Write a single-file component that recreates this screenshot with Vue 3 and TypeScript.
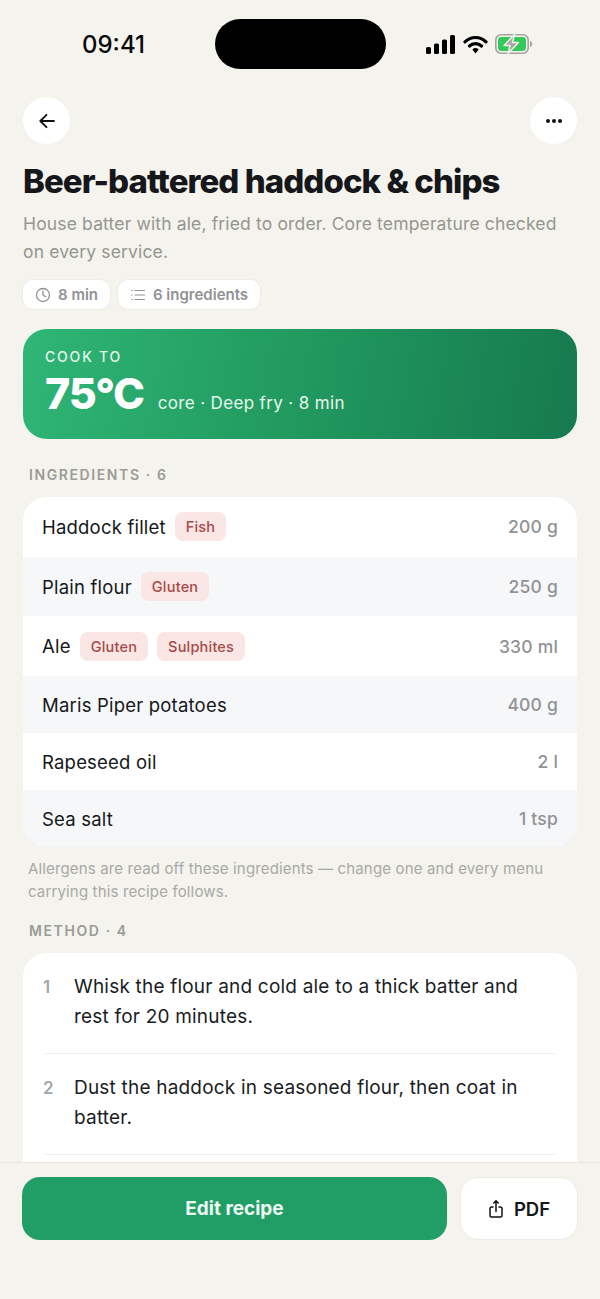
<script setup lang="ts">
interface Ingredient { name: string; qty: string; tags: string[] }
const ingredients: Ingredient[] = [
  { name: 'Haddock fillet', qty: '200 g', tags: ['Fish'] },
  { name: 'Plain flour', qty: '250 g', tags: ['Gluten'] },
  { name: 'Ale', qty: '330 ml', tags: ['Gluten', 'Sulphites'] },
  { name: 'Maris Piper potatoes', qty: '400 g', tags: [] },
  { name: 'Rapeseed oil', qty: '2 l', tags: [] },
  { name: 'Sea salt', qty: '1 tsp', tags: [] },
]
const steps: string[] = [
  'Whisk the flour and cold ale to a thick batter and rest for 20 minutes.',
  'Dust the haddock in seasoned flour, then coat in batter.',
  'Fry at 180°C for 8 minutes until deep golden and crisp.',
  'Check the core reaches 75°C, then drain and serve with chips.',
]
</script>

<template>
  <div class="phone">
    <div class="scroll">
      <div class="status">
        <span class="time">09:41</span>
        <div class="island"></div>
        <div class="status-icons">
          <svg width="31" height="19" viewBox="0 0 31 19"><rect x="1" y="12" width="5" height="7" rx="1.6"/><rect x="9" y="8.5" width="5" height="10.5" rx="1.6"/><rect x="17" y="4.5" width="5" height="14.5" rx="1.6"/><rect x="25" y="0" width="5" height="19" rx="1.6"/></svg>
          <svg width="25" height="19" viewBox="0 0 25 19"><path d="M2 6.8a15 15 0 0 1 21 0" fill="none" stroke="#000" stroke-width="3.2" stroke-linecap="round"/><path d="M6.5 11a9 9 0 0 1 12 0" fill="none" stroke="#000" stroke-width="3.2" stroke-linecap="round"/><path d="M9.3 14.4a5 5 0 0 1 6.4 0L12.5 18.4z" fill="#000"/></svg>
          <svg class="battery" width="38" height="20" viewBox="0 0 38 20"><rect x="0.8" y="0.8" width="32.4" height="18.4" rx="5.2" fill="none" stroke="#a4a49e" stroke-width="1.6"/><rect x="3" y="3" width="28" height="14" rx="3.4" fill="#34c759"/><path d="M35 7v6c1.4-.4 2.2-1.600 2.200-3S36.400 7.400 35 7z" fill="#a4a49e"/><path d="M19.500 0.500 9 11.500h6l-2 8 10.500-11h-6z" fill="#a8a8a2" stroke="#f4f3ee" stroke-width="1.400" stroke-linejoin="round"/></svg>
        </div>
      </div>

      <div class="nav">
        <button class="circle" aria-label="Back">
          <svg width="20" height="20" viewBox="0 0 20 20" fill="none" stroke="#111" stroke-width="1.800" stroke-linecap="round" stroke-linejoin="round"><path d="M17 10H3.500M9.500 3.800 3.300 10l6.200 6.200"/></svg>
        </button>
        <button class="circle" aria-label="More">
          <svg width="18" height="6" viewBox="0 0 18 6" fill="#111"><circle cx="3" cy="3" r="2"/><circle cx="9" cy="3" r="2"/><circle cx="15" cy="3" r="2"/></svg>
        </button>
      </div>

      <h1 class="title">Beer-battered haddock &amp; chips</h1>
      <p class="desc">House batter with ale, fried to order. Core temperature checked on every service.</p>

      <div class="pills">
        <span class="pill">
          <svg width="16" height="16" viewBox="0 0 16 16" fill="none" stroke="#8f9296" stroke-width="1.300" stroke-linecap="round" stroke-linejoin="round"><circle cx="8" cy="8" r="6.500"/><path d="M8 4.200V8l2.700 1.800"/></svg>
          8 min
        </span>
        <span class="pill">
          <svg width="16" height="16" viewBox="0 0 16 16" fill="none" stroke="#8f9296" stroke-width="1.200" stroke-linecap="round"><path d="M5 3.500h9.500M5 8h9.500M5 12.500h9.500M1.500 3.500h.6M1.500 8h.6M1.500 12.500h.6"/></svg>
          6 ingredients
        </span>
      </div>

      <section class="hero">
        <div class="hero-label">COOK TO</div>
        <div class="hero-main">
          <span class="temp">75°C</span>
          <span class="hero-sub">core · Deep fry · 8 min</span>
        </div>
      </section>

      <h2 class="section-label">INGREDIENTS · 6</h2>
      <div class="card ingredients">
        <div v-for="item in ingredients" :key="item.name" class="row" :class="{ tagged: item.tags.length }">
          <span class="name">{{ item.name }}</span>
          <span v-for="tag in item.tags" :key="tag" class="tag">{{ tag }}</span>
          <span class="qty">{{ item.qty }}</span>
        </div>
      </div>
      <p class="note">Allergens are read off these ingredients — change one and every menu carrying this recipe follows.</p>

      <h2 class="section-label method-label">METHOD · 4</h2>
      <div class="card method">
        <div v-for="(step, i) in steps" :key="i" class="step">
          <span class="num">{{ i + 1 }}</span>
          <span class="step-text">{{ step }}</span>
        </div>
      </div>
    </div>

    <footer class="footer">
      <button class="primary">Edit recipe</button>
      <button class="secondary">
        <svg width="16" height="20" viewBox="0 0 16 20" fill="none" stroke="#111" stroke-width="1.500" stroke-linecap="round" stroke-linejoin="round"><path d="M5 8H3.500A1.500 1.500 0 0 0 2 9.500v7A1.500 1.500 0 0 0 3.500 18h9a1.500 1.500 0 0 0 1.500-1.500v-7A1.500 1.500 0 0 0 12.500 8H11M8 12.500V2M5.800 4 8 1.800 10.200 4"/></svg>
        PDF
      </button>
    </footer>
  </div>
</template>

<style>
html, body { margin: 0; background: #f4f3ee; }
</style>

<style scoped>
.phone {
  width: 600px;
  height: 1299px;
  background: #f4f3ee;
  display: flex;
  flex-direction: column;
  overflow: hidden;
  font-family: Inter, "Liberation Sans", sans-serif;
  color: #15171a;
}
.scroll {
  flex: 1;
  min-height: 0;
  overflow: hidden;
  padding: 0 23px;
}
.status {
  height: 97px;
  display: flex;
  align-items: flex-start;
  position: relative;
}
.time {
  position: absolute;
  left: 59px;
  top: 30px;
  font-size: 24px;
  line-height: 30px;
  font-weight: 500;
  color: #0a0a0a;
}
.island {
  position: absolute;
  left: 192px;
  top: 19px;
  width: 171px;
  height: 50px;
  border-radius: 25px;
  background: #000;
}
.status-icons {
  position: absolute;
  left: 402px;
  top: 34px;
  display: flex;
  align-items: center;
  gap: 7px;
}
.nav {
  display: flex;
  justify-content: space-between;
}
.circle {
  width: 47px;
  height: 47px;
  border-radius: 50%;
  border: 0;
  padding: 0;
  background: #fff;
  display: flex;
  align-items: center;
  justify-content: center;
}
.title {
  margin: 17px 0 0;
  font-size: 33px;
  line-height: 40px;
  font-weight: 800;
  letter-spacing: -0.95px;
  white-space: nowrap;
}
.desc {
  margin: 9px 0 0;
  font-size: 17.500px;
  line-height: 27.500px;
  letter-spacing: 0.15px;
  color: #96968f;
}
.pills {
  display: flex;
  gap: 8px;
  margin-top: 15px;
}
.pill {
  display: flex;
  align-items: center;
  gap: 7px;
  height: 29px;
  padding: 0 12px;
  border-radius: 10px;
  background: #fff;
  box-shadow: 0 0 0 1px #edece7;
  font-size: 15px;
  font-weight: 600;
  color: #909295;
}
.hero {
  margin-top: 20px;
  height: 110px;
  box-sizing: border-box;
  padding: 19px 22px 0;
  border-radius: 24px;
  background: linear-gradient(100deg, #2fb677 0%, #21995f 50%, #167a4e 100%);
  color: #fff;
}
.hero-label {
  font-size: 14px;
  line-height: 18px;
  font-weight: 500;
  letter-spacing: 1.800px;
  color: #e4f6ec;
}
.hero-main {
  display: flex;
  align-items: baseline;
  gap: 14px;
  margin-top: 3px;
}
.temp {
  font-size: 43px;
  line-height: 48px;
  font-weight: 800;
  letter-spacing: -1.200px;
}
.hero-sub {
  font-size: 17px;
  font-weight: 400;
  letter-spacing: 0.35px;
  color: #e6f7ee;
}
.section-label {
  margin: 27px 0 0 6px;
  font-size: 14px;
  line-height: 18px;
  font-weight: 600;
  letter-spacing: 1.600px;
  color: #9b9b96;
}
.card {
  background: #fff;
  border-radius: 24px;
  overflow: hidden;
}
.ingredients {
  margin-top: 13px;
}
.row {
  display: flex;
  align-items: center;
  gap: 9px;
  height: 57px;
  padding: 0 19px;
}
.row.tagged {
  height: 59.700px;
}
.row:nth-child(even) {
  background: #f6f7f9;
}
.name {
  font-size: 18.500px;
  font-weight: 400;
  letter-spacing: 0.2px;
  color: #15171a;
}
.tag {
  height: 29px;
  line-height: 29px;
  padding: 0 11px;
  border-radius: 8px;
  background: #f9e6e5;
  font-size: 14.500px;
  font-weight: 500;
  letter-spacing: 0.2px;
  color: #a84a48;
}
.qty {
  margin-left: auto;
  font-size: 17.500px;
  font-weight: 500;
  letter-spacing: 0.2px;
  color: #909295;
}
.note {
  margin: 10px 5px 0;
  font-size: 15px;
  line-height: 23px;
  letter-spacing: 0.15px;
  color: #a9a9a4;
}
.method-label {
  margin-top: 19px;
}
.method {
  margin-top: 13px;
  padding: 0 20px;
}
.step {
  display: flex;
  gap: 19px;
  padding: 19px 0 21px;
  border-bottom: 1px solid #f1f1ef;
  font-size: 19px;
  line-height: 30px;
}
.num {
  width: 12px;
  flex: none;
  font-size: 17px;
  font-weight: 600;
  color: #a5a7aa;
}
.step-text {
  letter-spacing: 0.2px;
  color: #1a1c1f;
}
.footer {
  height: 137px;
  box-sizing: border-box;
  flex: none;
  display: flex;
  gap: 13px;
  padding: 14px 22px 0;
  border-top: 1px solid #e9e8e3;
  background: #f4f3ee;
}
.primary {
  flex: 1;
  height: 63px;
  border: 0;
  border-radius: 18px;
  background: #219e65;
  color: #eefaf3;
  font: 700 19px Inter, "Liberation Sans", sans-serif;
}
.secondary {
  width: 118px;
  height: 63px;
  box-sizing: border-box;
  border: 1px solid #eceBe6;
  border-radius: 18px;
  background: #fff;
  color: #15171a;
  font: 600 18.500px Inter, "Liberation Sans", sans-serif;
  display: flex;
  align-items: center;
  justify-content: center;
  gap: 10px;
}
</style>
